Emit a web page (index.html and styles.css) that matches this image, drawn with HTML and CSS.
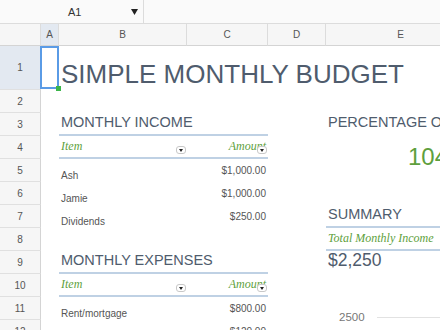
FILE: index.html
```html
<!DOCTYPE html>
<html lang="en">
<head>
    <meta charset="UTF-8">
    <meta name="viewport" content="width=device-width, initial-scale=1.0">
    <title>Simple Monthly Budget</title>
    <link rel="stylesheet" href="styles.css">
</head>
<body>
    <div class="topbar">
        <div class="namebox">
            <span class="ref">A1</span>
            <svg class="caret" width="7" height="6" viewBox="0 0 7 6"><path d="M0 0h7L3.5 6z"/></svg>
        </div>
    </div>

    <div class="sheet">
        <!-- column headers -->
        <div class="corner"></div>
        <div class="col active">A</div>
        <div class="col">B</div>
        <div class="col">C</div>
        <div class="col">D</div>
        <div class="col">E</div>

        <!-- 1 -->
        <div class="rh active">1</div>
        <div class="cell selected"></div>
        <div class="cell title">SIMPLE MONTHLY BUDGET</div>

        <!-- 2 -->
        <div class="rh">2</div>
        <div class="blank"></div>

        <!-- 3 -->
        <div class="rh">3</div>
        <div></div>
        <div class="cell section wide">MONTHLY INCOME</div>
        <div></div>
        <div class="cell section plain">PERCENTAGE OF INCOME SPENT</div>

        <!-- 4 -->
        <div class="rh">4</div>
        <div></div>
        <div class="cell head">Item<span class="filter"></span></div>
        <div class="cell head num">Amount<span class="filter"></span></div>
        <div></div>
        <div class="cell pct">104%</div>

        <!-- 5 -->
        <div class="rh">5</div>
        <div></div>
        <div class="cell">Ash</div>
        <div class="cell num">$1,000.00</div>
        <div></div>

        <!-- 6 -->
        <div class="rh">6</div>
        <div></div>
        <div class="cell">Jamie</div>
        <div class="cell num">$1,000.00</div>
        <div></div>
        <div></div>

        <!-- 7 -->
        <div class="rh">7</div>
        <div></div>
        <div class="cell">Dividends</div>
        <div class="cell num">$250.00</div>
        <div></div>
        <div class="cell section">SUMMARY</div>

        <!-- 8 -->
        <div class="rh">8</div>
        <div></div>
        <div></div>
        <div></div>
        <div></div>
        <div class="cell head">Total Monthly Income</div>

        <!-- 9 -->
        <div class="rh">9</div>
        <div></div>
        <div class="cell section wide">MONTHLY EXPENSES</div>
        <div></div>
        <div class="cell total">$2,250</div>

        <!-- 10 -->
        <div class="rh">10</div>
        <div></div>
        <div class="cell head">Item<span class="filter"></span></div>
        <div class="cell head num">Amount<span class="filter"></span></div>
        <div></div>
        <div></div>

        <!-- 11 -->
        <div class="rh">11</div>
        <div></div>
        <div class="cell">Rent/mortgage</div>
        <div class="cell num">$800.00</div>
        <div></div>
        <div></div>

        <!-- 12 -->
        <div class="rh">12</div>
        <div></div>
        <div class="cell">Phone</div>
        <div class="cell num">$120.00</div>
        <div></div>
        <div></div>

        <!-- chart (floats over the cells) -->
        <div class="chart">
            <span>2500</span>
            <span class="gridline"></span>
        </div>
    </div>
</body>
</html>
```

FILE: styles.css
```css
* {
    margin: 0;
    padding: 0;
    box-sizing: border-box;
}
body {
    width: 440px;
    height: 330px;
    overflow: hidden;
    background: #fff;
    font-family: "Liberation Sans", Arial, sans-serif;
    color: #555;
}

/* name box bar */
.topbar {
    height: 24px;
    display: flex;
    background: #fafafa;
    border-bottom: 1px solid #dcdcdc;
}
.namebox {
    width: 144px;
    display: flex;
    align-items: center;
    padding: 0 5px 0 68px;
    border-right: 1px solid #dcdcdc;
    font-size: 11px;
    color: #333;
}
.namebox .ref {
    flex: 1;
}
.caret {
    fill: #222;
}

/* grid */
.sheet {
    position: relative;
    display: grid;
    grid-template-columns: 41px 18px 128px 81px 58px 150px;
    grid-template-rows: 22px 44px;
    grid-auto-rows: 23px;
}
.corner, .col {
    background: #f6f6f6;
    border-right: 1px solid #dcdcdc;
    border-bottom: 1px solid #d4d4d4;
}
.col, .rh {
    display: flex;
    align-items: center;
    justify-content: center;
    font-size: 10px;
    color: #555;
}
.rh {
    background: #f6f6f6;
    border-right: 1px solid #d4d4d4;
    border-bottom: 1px solid #e0e0e0;
}
.active {
    background: #e3e9f1;
}
.blank {
    grid-column: span 5;
}

.cell {
    display: flex;
    align-items: flex-end;
    padding: 0 2px;
    font-size: 10px;
    line-height: 12px;
    white-space: nowrap;
}
.num {
    align-items: center;
    justify-content: flex-end;
}

/* selected A1 */
.selected {
    position: relative;
}
.selected::after {
    content: "";
    position: absolute;
    left: -1px;
    top: 0;
    right: 0;
    bottom: 1px;
    border: 2px solid #5a9be6;
}
.selected::before {
    content: "";
    position: absolute;
    right: -2px;
    bottom: -1px;
    width: 5px;
    height: 5px;
    background: #3bb54a;
    z-index: 1;
}

.title {
    grid-column: span 4;
    font-size: 26px;
    line-height: 26px;
    color: #4f5c6d;
    padding-bottom: 3px;
}
.section {
    font-size: 14.5px;
    line-height: 16px;
    color: #4f5c6d;
    border-bottom: 2px solid #bfd1e4;
    padding-bottom: 4px;
}
.section.wide {
    grid-column: span 2;
}
.section.plain {
    border-bottom: 0;
    padding-bottom: 6px;
}
.head {
    position: relative;
    font-family: "Liberation Serif", "Times New Roman", serif;
    font-style: italic;
    font-size: 12px;
    line-height: 14px;
    color: #5e9f3d;
    border-bottom: 2px solid #bfd1e4;
    padding-bottom: 4px;
}
.head.num {
    align-items: flex-end;
}
.filter {
    position: absolute;
    right: 1px;
    bottom: 3px;
    width: 10px;
    height: 8px;
    display: flex;
    align-items: center;
    justify-content: center;
    background: #fff;
    border: 1px solid #c8c8c8;
    border-radius: 3px;
}
.filter::after {
    content: "";
    border-left: 2.5px solid transparent;
    border-right: 2.5px solid transparent;
    border-top: 3px solid #222;
}

.pct {
    grid-row: span 2;
    align-items: center;
    padding-left: 82px;
    padding-bottom: 4px;
    font-size: 24px;
    line-height: 26px;
    color: #5e9f3d;
}
.total {
    align-items: flex-start;
    font-size: 17.5px;
    line-height: 18px;
    color: #4f5c6d;
}

.chart {
    position: absolute;
    left: 339px;
    top: 287px;
    display: flex;
    align-items: center;
    gap: 12px;
    font-size: 11.5px;
    line-height: 13px;
    color: #777;
}
.gridline {
    width: 120px;
    height: 1px;
    background: #e2e2e2;
}
```
